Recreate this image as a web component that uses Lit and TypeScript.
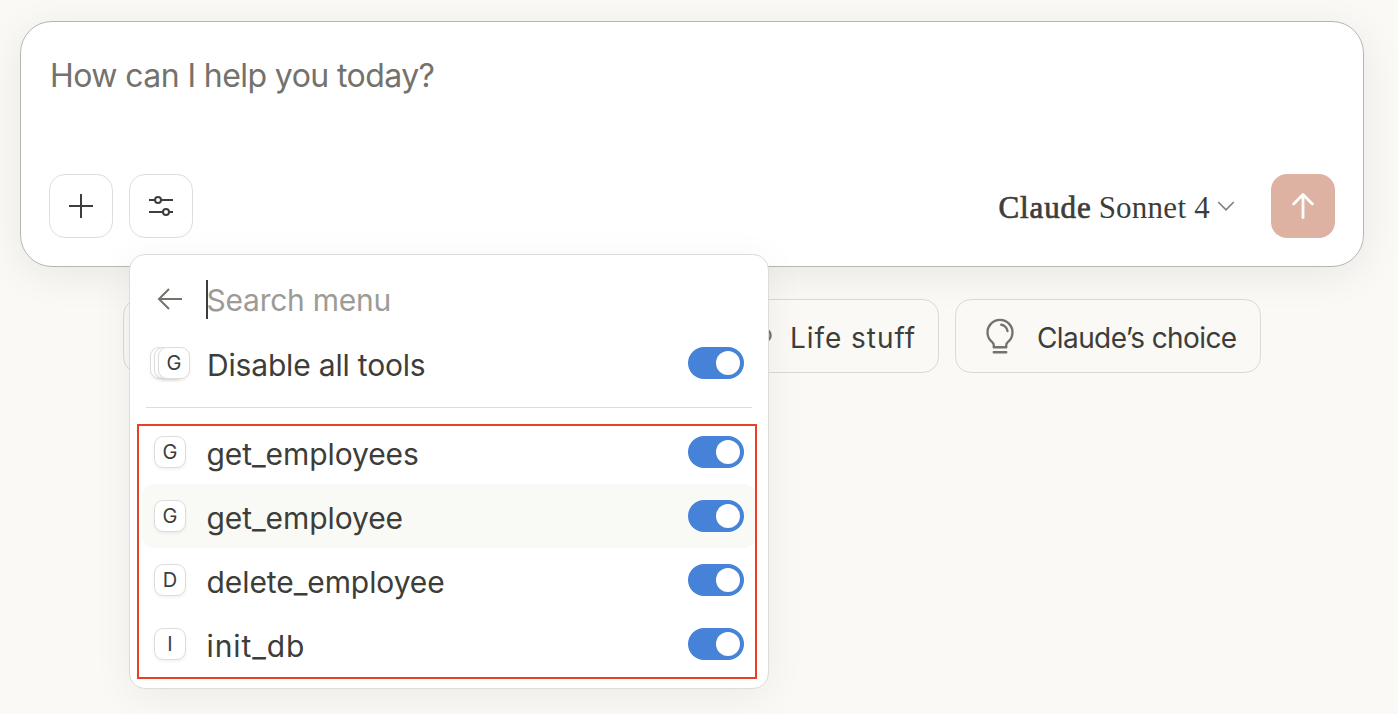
import { LitElement, html, css } from "lit";
import { customElement, property } from "lit/decorators.js";

@customElement("tool-switch")
class ToolSwitch extends LitElement {
  static styles = css`
    :host { display: flex; justify-content: flex-end; box-sizing: border-box; width: 56px; height: 32px; padding: 4px; border-radius: 16px; background: #4582d8; }
    .knob { width: 24px; height: 24px; border-radius: 50%; background: #fff; }
  `;
  render() { return html`<div class="knob"></div>`; }
}

@customElement("tool-row")
class ToolRow extends LitElement {
  @property() name = "";
  @property() letter = "";
  static styles = css`
    :host { display: flex; align-items: center; box-sizing: border-box; height: 64px; padding: 0 12px; border-radius: 12px; letter-spacing: -.08px; }
    :host([active]) { background: #f9faf5; }
    :host([loose]) { letter-spacing: .9px; }
    .badge { box-sizing: border-box; width: 32px; height: 32px; border: 1px solid #dcdcda; border-radius: 9px; background: #fff; box-shadow: 0 2px 3px rgba(0,0,0,.05); display: flex; align-items: center; justify-content: center; font-size: 20px; line-height: 20px; letter-spacing: 0; color: #3d3d3a; }
    .name { flex: 1; margin-left: 20.5px; padding-top: 4px; white-space: nowrap; }
  `;
  render() {
    return html`<div class="badge">${this.letter}</div><div class="name">${this.name}</div><tool-switch></tool-switch>`;
  }
}

@customElement("app-root")
class AppRoot extends LitElement {
  static styles = css`
    :host { display: block; position: relative; box-sizing: border-box; width: 1398px; height: 714px; padding: 21px 34px 0 20px; overflow: hidden; background: #faf9f5; color: #3d3d3a; font-family: Inter, "Liberation Sans", sans-serif; }
    svg { display: block; }
    .composer { box-sizing: border-box; height: 246px; border: 1px solid #b6b6b2; border-radius: 32px; background: #fff; box-shadow: 0 8px 40px rgba(0,0,0,.075); padding: 33px 28px 28px; display: flex; flex-direction: column; justify-content: space-between; }
    .prompt { padding-left: 1px; font-size: 32px; line-height: 42px; letter-spacing: -.58px; color: #73726c; }
    .bar { display: flex; align-items: center; gap: 16px; }
    .btn { box-sizing: border-box; width: 64px; height: 64px; border: 1px solid #dededc; border-radius: 16px; display: flex; align-items: center; justify-content: center; }
    .model { margin-left: auto; margin-right: 20px; display: flex; align-items: center; gap: 7px; font-family: "Liberation Serif", serif; font-size: 31px; line-height: 36px; white-space: nowrap; }
    .brand { padding-top: 3px; letter-spacing: .9px; -webkit-text-stroke: .7px #3d3d3a; }
    .version { padding-top: 3px; letter-spacing: .25px; }
    .send { width: 64px; height: 64px; border-radius: 16px; background: #ddb2a2; display: flex; align-items: center; justify-content: center; }
    .chips { margin: 32px 103px 0; display: flex; gap: 16px; }
    .chip { box-sizing: border-box; height: 74px; border: 1px solid #dad9d5; border-radius: 16px; background: #faf9f5; padding: 0 24px; display: flex; align-items: center; gap: 17px; color: #3d3d3a; font-size: 28px; white-space: nowrap; }
    .chip span { padding-top: 3px; }
    .chip.blank { flex: 1; }
    .chip.life { width: 231px; letter-spacing: .95px; }
    .chip.choice { width: 306px; letter-spacing: -.6px; }
    .chip svg { flex: none; }
    .menu { position: absolute; left: 129px; top: 254px; box-sizing: border-box; width: 640px; height: 435px; border: 1px solid #dcdcda; border-radius: 16px; background: #fff; box-shadow: 0 8px 40px rgba(0,0,0,.06); padding: 12px; font-size: 30px; line-height: 40px; }
    .search { display: flex; align-items: center; height: 64px; padding-left: 15px; }
    .caret { width: 2px; height: 39px; margin-left: 23px; background: #3d3d3a; }
    .hint { color: #9c9b96; padding-top: 2px; margin-left: -1.5px; letter-spacing: -.25px; }
    .all { display: flex; align-items: center; height: 64px; padding: 0 12px 0 8px; }
    .stack { display: flex; }
    .card { box-sizing: border-box; width: 32px; height: 32px; border: 1px solid #dcdcda; border-radius: 9px; background: #fff; box-shadow: 0 2px 3px rgba(0,0,0,.05); display: flex; align-items: center; justify-content: center; font-size: 20px; }
    .card + .card { margin-left: -28px; }
    .label { flex: 1; margin-left: 17px; padding-top: 3px; letter-spacing: -.18px; }
    .rule { height: 1px; margin: 12px 4px; background: #dcdcda; }
    .marker { position: absolute; left: 137px; top: 424px; box-sizing: border-box; width: 620px; height: 255px; border: 2px solid #ea4026; }
  `;
  private tools = [["G", "get_employees"], ["G", "get_employee"], ["D", "delete_employee"], ["I", "init_db"]];
  render() {
    return html`
      <div class="composer">
        <div class="prompt">How can I help you today?</div>
        <div class="bar">
          <div class="btn"><svg width="24" height="24" fill="none" stroke="#3d3d3a" stroke-width="2"><path d="M12 0v24M0 12h24"/></svg></div>
          <div class="btn"><svg width="24" height="24" fill="none" stroke="#3d3d3a" stroke-width="2"><path d="M0 6h6M12 6h12M0 18h14M20 18h4"/><circle cx="9" cy="6" r="3"/><circle cx="17" cy="18" r="3"/></svg></div>
          <div class="model"><span class="brand">Claude</span><span class="version">Sonnet 4</span><svg width="18" height="12" fill="none" stroke="#83827d" stroke-width="1.7"><path d="M1.2 2L9 9.8 16.8 2"/></svg></div>
          <div class="send"><svg width="24" height="28" fill="none" stroke="#fff" stroke-width="2.8" stroke-linecap="round" stroke-linejoin="round"><path d="M12 25.6V2.6M2.6 12L12 2.6l9.4 9.4"/></svg></div>
        </div>
      </div>
      <div class="chips">
        <div class="chip blank"></div><div class="chip blank"></div><div class="chip blank"></div>
        <div class="chip life"><svg width="40" height="40" viewBox="0 0 256 256" fill="none" stroke="#73726c" stroke-width="15" stroke-linecap="round" stroke-linejoin="round"><path d="M32 216h176M88 24v32M120 24v32M152 24v32M83 216a88 88 0 0 1-51-80V88h176v48a88 88 0 0 1-51 80M208 88a32 32 0 0 1 32 32v8a32 32 0 0 1-32 32"/></svg><span>Life stuff</span></div>
        <div class="chip choice"><svg width="40" height="40" viewBox="0 0 256 256" fill="none" stroke="#73726c" stroke-width="15" stroke-linecap="round" stroke-linejoin="round"><path d="M88 232h80M78 167a80 80 0 1 1 100 0c-6 5-10 12-10 19v14H88v-14c0-7-4-14-10-19zM136 56c20 3 37 20 40 40"/></svg><span>Claude’s choice</span></div>
      </div>
      <div class="menu">
        <div class="search"><svg width="26" height="22" fill="none" stroke="#73726c" stroke-width="2"><path d="M25 11H2M12 1L2 11l10 10"/></svg><span class="caret"></span><span class="hint">Search menu</span></div>
        <div class="all"><div class="stack"><div class="card"></div><div class="card"></div><div class="card">G</div></div><div class="label">Disable all tools</div><tool-switch></tool-switch></div>
        <div class="rule"></div>
        ${this.tools.map(([l, n], i) => html`<tool-row letter=${l} name=${n} ?active=${i === 1} ?loose=${n.length < 8}></tool-row>`)}
      </div>
      <div class="marker"></div>`;
  }
}
